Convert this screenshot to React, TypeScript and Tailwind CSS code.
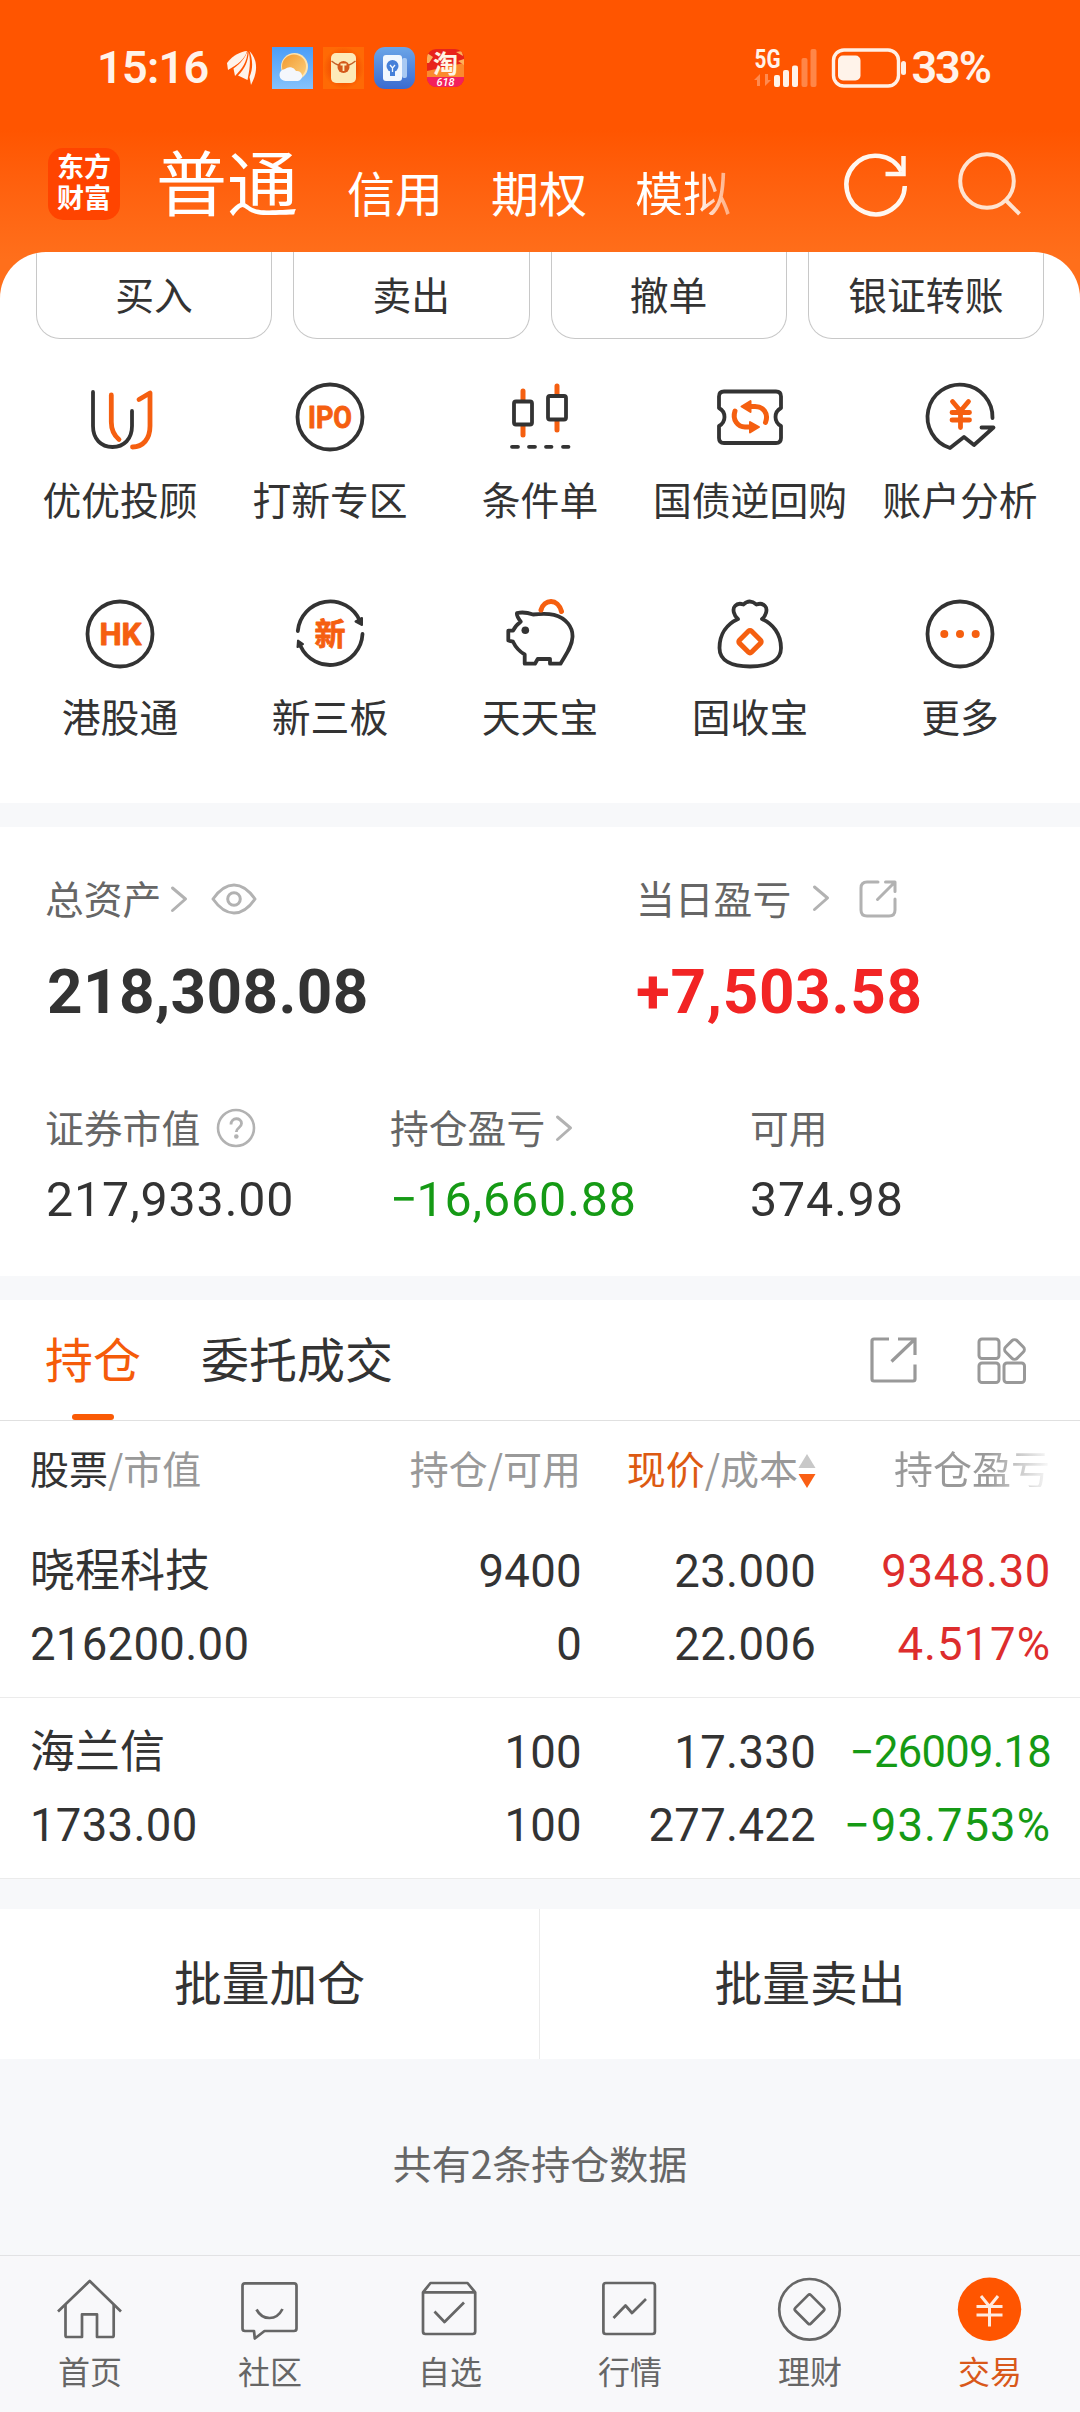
import React from "react";

const DARK = "#333333";
const ORANGE = "#f55f10";

/* ---------- status bar ---------- */

function StatusBar() {
  return (
    <div className="flex h-[136px] items-center text-[#fff3ea]">
      <span className="ml-[97px] w-[130px] whitespace-nowrap font-['Roboto'] text-[45px] font-semibold leading-[48px] tracking-[-0.7px]">
        15:16
      </span>
      <svg width="30" height="36" viewBox="0 0 30 36" fill="#fff3ea">
        <path d="M0 13C6 5 14 1.500 20 1C18 9 10 15 1 20Z" />
        <path d="M20.500 1C20.500 11 15 19 8 26L6.500 18.500C14 13 18 8 20.500 1Z" />
        <path d="M22.500 1C31 10 31 22 24 35L22.500 27C26.500 18 25.500 9 22.500 1Z" />
        <path d="M21.800 2C24 12 22.500 20 20.500 30L11 25.500C18 19 21 11 21.800 2Z" />
      </svg>
      <svg className="ml-[15px]" width="41" height="42" viewBox="0 0 41 42">
        <defs>
          <linearGradient id="sky" x1="0" y1="0" x2="0" y2="1">
            <stop offset="0" stopColor="#4a9df8" />
            <stop offset="1" stopColor="#86c2fb" />
          </linearGradient>
          <linearGradient id="sun" x1="0" y1="0" x2="1" y2="1">
            <stop offset="0" stopColor="#f2992f" />
            <stop offset="1" stopColor="#fcd07c" />
          </linearGradient>
        </defs>
        <rect width="41" height="42" fill="url(#sky)" />
        <circle cx="22.500" cy="19.500" r="13.500" fill="#fde3ae" />
        <circle cx="22" cy="19.500" r="12" fill="url(#sun)" />
        <path d="M14 34a6 6 0 0 1-1-12a7 7 0 0 1 11 2a5 5 0 0 1 2 10z" fill="#f4f7fc" />
      </svg>
      <svg className="ml-[10px]" width="41" height="42" viewBox="0 0 41 42">
        <defs>
          <radialGradient id="env">
            <stop offset="0.500" stopColor="#f04a00" />
            <stop offset="1" stopColor="#ff6a05" />
          </radialGradient>
        </defs>
        <rect width="41" height="42" fill="url(#env)" />
        <rect x="8" y="6" width="25" height="30" rx="5" fill="#fdeab8" />
        <path d="M8.500 14Q20.500 24 32.500 14" fill="none" stroke="#c4602a" strokeWidth="1.500" />
        <circle cx="20.500" cy="20" r="6" fill="#d4591b" />
        <path d="M17.500 17.500H23.500M20.500 17.500V24" stroke="#fdeab8" strokeWidth="1.800" />
      </svg>
      <svg className="ml-[10px]" width="41" height="42" viewBox="0 0 41 42">
        <defs>
          <linearGradient id="tip" x1="0" y1="0" x2="0" y2="1">
            <stop offset="0" stopColor="#6ba5e8" />
            <stop offset="1" stopColor="#3a6bd0" />
          </linearGradient>
        </defs>
        <rect width="41" height="42" rx="11" fill="url(#tip)" />
        <rect x="28" y="11" width="5" height="20" rx="2" fill="#a9c9f3" />
        <rect x="9" y="8" width="19" height="26" rx="3" fill="#f2f7fe" />
        <circle cx="18.500" cy="19" r="6" fill="#4680d9" />
        <path d="M16 24H21V29H16Z" fill="#4680d9" />
        <path d="M16 18L18.500 21L21 18M18.500 21V25" stroke="#f2f7fe" strokeWidth="1.300" fill="none" />
      </svg>
      <svg className="ml-[12px] overflow-visible" width="37" height="38" viewBox="0 0 37 38">
        <defs>
          <clipPath id="tbClip">
            <rect width="37" height="38" rx="9" />
          </clipPath>
        </defs>
        <g clipPath="url(#tbClip)">
          <rect width="37" height="38" fill="#e8231b" />
          <path d="M0 22L37 14V28H0Z" fill="#fb8a2e" />
          <path d="M0 4L6 8L2 14L0 14ZM29 3L35 2L36 7ZM31 12L37 10V16Z" fill="#fcb05a" />
          <rect y="28" width="37" height="10" fill="#f3205c" />
        </g>
        <text x="18.500" y="24" textAnchor="middle" fontFamily="Noto Sans CJK SC, sans-serif" fontWeight="700" fontSize="25" fill="#fff5e5">
          淘
        </text>
        <text x="18.500" y="37" textAnchor="middle" fontFamily="Roboto, sans-serif" fontStyle="italic" fontWeight="500" fontSize="11" fill="#ffffff">
          618
        </text>
      </svg>

      <svg className="ml-auto overflow-visible" width="64" height="42" viewBox="0 0 64 42">
        <text x="0.500" y="20.500" fontFamily="Roboto, sans-serif" fontWeight="700" fontSize="25.500" textLength="26" lengthAdjust="spacingAndGlyphs" fill="#fff3ea">
          5G
        </text>
        <path d="M0 33L6 27V39H3V33ZM11 27V39L17 33H14V27Z" fill="#ff8a50" />
        <g fill="#fff3ea">
          <rect x="20" y="28" width="6" height="12" rx="2" />
          <rect x="29" y="23" width="6" height="17" rx="2" />
          <rect x="38" y="18.500" width="6" height="21.500" rx="2" />
        </g>
        <g fill="#ff8648">
          <rect x="47.500" y="11" width="6" height="29" rx="2" />
          <rect x="56.500" y="2" width="6" height="38" rx="2" />
        </g>
      </svg>
      <svg className="ml-[13px]" width="76" height="40" viewBox="0 0 76 40">
        <rect x="2.500" y="2" width="65" height="36" rx="10.500" fill="none" stroke="#fff0e6" strokeWidth="3.400" />
        <rect x="7" y="7.500" width="22.500" height="25" rx="5" fill="#fff3ea" />
        <rect x="70" y="13" width="5" height="14" rx="2.500" fill="#fff0e6" />
      </svg>
      <span className="ml-[4px] mr-[90px] whitespace-nowrap font-['Roboto'] text-[45px] font-semibold leading-[48px] tracking-[-2px]">
        33%
      </span>
    </div>
  );
}

/* ---------- top tabs ---------- */

function TopTabs() {
  return (
    <div className="flex h-[116px] items-start text-white">
      <div className="ml-[48px] mt-[12px] flex h-[72px] w-[72px] flex-col items-center justify-center rounded-[15px] bg-[#ff4400] font-['Roboto','Noto_Sans_CJK_SC'] text-[27px] font-bold leading-[31px]">
        <span>东方</span>
        <span>财富</span>
      </div>
      <span className="ml-[36px] mt-[7px] text-[71px] leading-[72px]">普通</span>
      <div className="ml-[49px] mt-[31px] flex gap-[48px] text-[48px] leading-[48px]">
        <span>信用</span>
        <span>期权</span>
        <span className="bg-linear-to-r from-white from-62% to-white/45 bg-clip-text text-transparent">
          模拟
        </span>
      </div>
      <svg className="ml-auto mt-[13px]" width="72" height="72" viewBox="0 0 72 72" fill="none" stroke="#fff7f0" strokeWidth="4.500">
        <path d="M64.800 37A29.200 29.200 0 1 1 61.500 22.500" />
        <path d="M45.500 25H63.500V7" />
      </svg>
      <svg className="ml-[41px] mr-[55px] mt-[13px]" width="72" height="72" viewBox="0 0 72 72" fill="none" stroke="#ffe3d0" strokeWidth="4">
        <circle cx="34" cy="32" r="26.800" />
        <path d="M52.500 51L66.500 65" />
      </svg>
    </div>
  );
}

/* ---------- shortcut grid ---------- */

function ShortcutIcon({ children }: { children: React.ReactNode }) {
  return (
    <svg width="80" height="80" viewBox="0 0 80 80" fill="none" stroke={DARK} strokeWidth="3.800" strokeLinecap="round" strokeLinejoin="round">
      {children}
    </svg>
  );
}

const shortcuts: { label: string; icon: React.ReactNode }[] = [
  {
    label: "优优投顾",
    icon: (
      <>
        <path d="M13 15V49C13 62 21 70 32.500 70S52 62 52 49V34" />
        <g stroke={ORANGE} strokeWidth="4.800">
          <path d="M31.300 18V45Q31.300 56 39 62.500" />
          <path d="M59 22.500L70 16V49C70 62 63 70 52.500 70" />
        </g>
      </>
    ),
  },
  {
    label: "打新专区",
    icon: (
      <>
        <circle cx="40" cy="40" r="32.500" />
        <text x="40" y="51" textAnchor="middle" textLength="44" lengthAdjust="spacingAndGlyphs" fontFamily="Roboto, sans-serif" fontWeight="700" fontSize="30.500" fill={ORANGE} stroke={ORANGE} strokeWidth="0.900">
          IPO
        </text>
      </>
    ),
  },
  {
    label: "条件单",
    icon: (
      <>
        <path d="M23 14V23M23 49V58M57 9V18M57 44V53" stroke={ORANGE} strokeWidth="5" />
        <rect x="14" y="24.500" width="18" height="23" rx="2" />
        <rect x="48" y="19" width="18" height="23.500" rx="2" />
        <path d="M12 69.800H18M29 69.800H35M46 69.800H51.500M63 69.800H68.500" />
      </>
    ),
  },
  {
    label: "国债逆回购",
    icon: (
      <>
        <path d="M14 14.500H66Q71 14.500 71 19.500V31Q65.500 34 65.500 40T71 49V61Q71 66 66 66H14Q9 66 9 61V49Q14.500 46 14.500 40T9 31V19.500Q9 14.500 14 14.500Z" />
        <g stroke={ORANGE} strokeWidth="5">
          <path d="M25 34C22 43 28 50 35 50H42" />
          <path d="M55.500 45.500C59 36 53 29.500 45 29.500H38" />
        </g>
        <path d="M49 50L40 45V55.500ZM31.500 29.500L40.500 24V35Z" fill={ORANGE} stroke={ORANGE} strokeWidth="2" />
      </>
    ),
  },
  {
    label: "账户分析",
    icon: (
      <>
        <path d="M72.500 41A32.500 32.500 0 1 0 30 71L44 60L54 68L73.500 50.500H61.500" />
        <path d="M32.500 24.500L40.500 34L48.500 24.500M32 35.500H49.500M32 43H49.500M40.500 34V50.500" stroke={ORANGE} strokeWidth="4.800" />
      </>
    ),
  },
  {
    label: "港股通",
    icon: (
      <>
        <circle cx="40" cy="40" r="32.500" />
        <text x="40.500" y="51" textAnchor="middle" textLength="42" lengthAdjust="spacingAndGlyphs" fontFamily="Roboto, sans-serif" fontWeight="700" fontSize="30.500" fill={ORANGE} stroke={ORANGE} strokeWidth="0.900">
          HK
        </text>
      </>
    ),
  },
  {
    label: "新三板",
    icon: (
      <>
        <path d="M7.800 37A32.500 32.500 0 0 1 70 27M72.500 40A32.500 32.500 0 0 1 10.500 52" />
        <path d="M72 31L65.500 27.500L72 24ZM8 46.500L7.500 53L13 50Z" fill={DARK} strokeWidth="2" />
        <text x="40" y="51" textAnchor="middle" fontFamily="Noto Sans CJK SC, sans-serif" fontWeight="700" fontSize="31" fill={ORANGE} stroke={ORANGE} strokeWidth="0.800">
          新
        </text>
      </>
    ),
  },
  {
    label: "天天宝",
    icon: (
      <>
        <path d="M20.700 27.700Q16 21 17 19Q25 17.500 33 20.500Q46 19 54 20.800C66 24 73 33 72.500 43C72 53 66 60 60.500 69.700H50V64.800L37.700 65L35 69.700H24.700V60.500Q17 56 13 47.700L8.300 46.500V36.700H13Q15 32 20.700 27.700Z" />
        <circle cx="25.300" cy="36.300" r="3.800" fill={DARK} stroke="none" />
        <path d="M41 16C44 5 58 4 61.500 17.500" stroke={ORANGE} strokeWidth="5" />
      </>
    ),
  },
  {
    label: "固收宝",
    icon: (
      <>
        <path d="M28 25C24 22 22 15 25 12Q28 8.500 33.500 10.500Q39.500 4.500 46.500 10.500Q52 8.500 55 12C58 15 56 22 52 25C63 30 71 40 71 54C71 67 58 72.500 40 72.500S9.500 67 9.500 54C9.500 40 17 30 28 25Z" />
        <rect x="31.500" y="39.200" width="17" height="17" rx="2" transform="rotate(45 40 47.700)" stroke={ORANGE} strokeWidth="5" />
      </>
    ),
  },
  {
    label: "更多",
    icon: (
      <>
        <circle cx="40" cy="40" r="32.500" />
        <g fill={ORANGE} stroke="none">
          <circle cx="24.300" cy="40" r="4" />
          <circle cx="40" cy="40" r="4" />
          <circle cx="55.700" cy="40" r="4" />
        </g>
      </>
    ),
  },
];

function Shortcuts() {
  return (
    <div className="mt-[38px] grid grid-cols-5 px-[15px]">
      {shortcuts.map((s) => (
        <div key={s.label} className="flex h-[217px] flex-col items-center">
          <ShortcutIcon>{s.icon}</ShortcutIcon>
          <span className="mt-[21px] whitespace-nowrap text-[38.800px] leading-[40px]">{s.label}</span>
        </div>
      ))}
    </div>
  );
}

/* ---------- assets ---------- */

function Chevron({ className }: { className?: string }) {
  return (
    <svg className={className} width="18" height="28" viewBox="0 0 18 28" fill="none" stroke="#b2b2b2" strokeWidth="3" strokeLinecap="round" strokeLinejoin="round">
      <path d="M2.500 3L15.500 14L2.500 25.500" />
    </svg>
  );
}

function Assets() {
  return (
    <section className="h-[449px] bg-white pt-[50px]">
      <div className="flex h-[40px] items-center text-[38.800px] leading-[40px] text-[#666]">
        <div className="flex w-[636px] items-center pl-[45px]">
          <span>总资产</span>
          <Chevron className="ml-[9px] mt-[3px]" />
          <svg className="ml-[23px] mt-[4px]" width="46" height="32" viewBox="0 0 46 32" fill="none" stroke="#b2b2b2" strokeWidth="3">
            <path d="M2 16C9 6 16 2 23 2S37 6 44 16C37 26 30 30 23 30S9 26 2 16Z" strokeLinejoin="round" />
            <circle cx="23" cy="16" r="6.300" />
          </svg>
        </div>
        <span>当日盈亏</span>
        <Chevron className="ml-[21px] mt-[2px]" />
        <svg className="ml-[29px] mt-[3px]" width="38" height="38" viewBox="0 0 38 38" fill="none" stroke="#b2b2b2" strokeWidth="3" strokeLinecap="round" strokeLinejoin="round">
          <path d="M19 2H8Q2 2 2 8V30Q2 36 8 36H30Q36 36 36 30V19" />
          <path d="M26.500 2H36V11.500M35 3L18.500 19.500" />
        </svg>
      </div>
      <div className="mt-[43px] flex font-['Roboto'] text-[62px] font-bold leading-[64px]">
        <span className="w-[636px] pl-[47px] tracking-[0.4px]">218,308.08</span>
        <span className="tracking-[0.7px] text-[#f22424]">+7,503.58</span>
      </div>
      <div className="mt-[82px] flex h-[40px] items-center text-[38.800px] leading-[40px] text-[#666]">
        <div className="flex w-[390px] items-center pl-[45px]">
          <span>证券市值</span>
          <svg className="ml-[16px] mt-[4px]" width="40" height="40" viewBox="0 0 40 40" fill="none" stroke="#b2b2b2">
            <circle cx="20" cy="20" r="18" strokeWidth="2.600" />
            <path d="M15 16.500C15 9 25.500 9 25.500 15.500C25.500 20 20.300 19.500 20.300 24" strokeWidth="2.800" />
            <circle cx="20.300" cy="28.500" r="2.300" fill="#b2b2b2" stroke="none" />
          </svg>
        </div>
        <div className="flex w-[360px] items-center">
          <span>持仓盈亏</span>
          <Chevron className="ml-[10px] mt-[4px]" />
        </div>
        <span>可用</span>
      </div>
      <div className="mt-[30px] flex font-['Roboto'] text-[48.300px] leading-[48px] tracking-[0.9px]">
        <span className="w-[390px] pl-[46px]">217,933.00</span>
        <span className="w-[360px] text-[#159a15]">
          <span className="-mr-[2px]">−</span>16,660.88
        </span>
        <span>374.98</span>
      </div>
    </section>
  );
}

/* ---------- holdings ---------- */

function PanelTabs() {
  return (
    <div className="flex h-[121px] items-start border-b-[1.5px] border-[#e0e0e0] bg-white">
      <div className="ml-[45px] mt-[33px] flex h-[87px] flex-col items-center justify-between text-[48px] leading-[48px] text-[#f55b0a]">
        <span>持仓</span>
        <span className="h-[6px] w-[42px] rounded-full bg-[#fa5a05]" />
      </div>
      <span className="ml-[60px] mt-[33px] text-[48px] leading-[48px]">委托成交</span>
      <svg className="ml-auto mt-[37px]" width="47" height="46" viewBox="0 0 47 46" fill="none" stroke="#999" strokeWidth="3.200">
        <path d="M19 2H4Q2 2 2 4V42Q2 44 4 44H43Q45 44 45 42V27.500" />
        <path d="M28 2H45V18M44.500 2.500L21.500 24.500" />
      </svg>
      <svg className="ml-[60px] mr-[53px] mt-[37px]" width="50" height="48" viewBox="0 0 50 48" fill="none" stroke="#999" strokeWidth="3">
        <rect x="2" y="2" width="20" height="19.500" rx="3" />
        <rect x="2" y="26" width="20" height="19.500" rx="3" />
        <rect x="27" y="26" width="20.500" height="19.500" rx="3" />
        <rect x="29.500" y="4.500" width="16" height="16" rx="3.500" transform="rotate(45 37.500 12.500)" />
      </svg>
    </div>
  );
}

function TableHead() {
  return (
    <div className="flex h-[96px] items-center bg-white pb-[5px] pl-[30px] text-[39px] leading-[40px] text-[#999]">
      <span className="w-[300px]">
        <span className="text-[#333]">股票</span>/市值
      </span>
      <span className="w-[251px] text-right">持仓/可用</span>
      <span className="flex w-[235px] items-center justify-end whitespace-nowrap">
        <span className="text-[#dd5a12]">现价</span>/成本
        <svg className="mt-[8px]" width="18" height="36" viewBox="0 0 18 36">
          <path d="M9 1L17.500 15H0.500Z" fill="#c8c8c8" />
          <path d="M0.500 21H17.500L9 35Z" fill="#fa5f14" />
        </svg>
      </span>
      <span className="ml-[78px] bg-linear-to-r from-[#999] from-60% to-[#999]/5 bg-clip-text text-transparent">
        持仓盈亏
      </span>
    </div>
  );
}

interface Holding {
  name: string;
  value: string;
  held: string;
  available: string;
  price: string;
  cost: string;
  profit: string;
  ratio: string;
  up: boolean;
}

const holdings: Holding[] = [
  { name: "晓程科技", value: "216200.00", held: "9400", available: "0", price: "23.000", cost: "22.006", profit: "9348.30", ratio: "4.517%", up: true },
  { name: "海兰信", value: "1733.00", held: "100", available: "100", price: "17.330", cost: "277.422", profit: "−26009.18", ratio: "−93.753%", up: false },
];

function HoldingRow({ h }: { h: Holding }) {
  const tone = h.up ? "text-[#dd2d2d]" : "text-[#159a15]";
  const profitSize = h.up ? "tracking-[0.6px]" : "text-[43.5px] tracking-[-0.7px]";
  return (
    <div className="flex h-[181px] border-b border-[#ebebeb] bg-white pl-[30px] pt-[25px] font-['Roboto'] text-[45.500px] leading-[60px] tracking-[0.3px]">
      <div className="flex w-[300px] flex-col gap-[17px]">
        <span className="-mt-[4px] font-['Noto_Sans_CJK_SC'] text-[45px] tracking-normal">{h.name}</span>
        <span>{h.value}</span>
      </div>
      <div className="flex w-[252px] flex-col gap-[13px] text-right">
        <span>{h.held}</span>
        <span>{h.available}</span>
      </div>
      <div className="flex w-[234px] flex-col gap-[13px] text-right">
        <span>{h.price}</span>
        <span>{h.cost}</span>
      </div>
      <div className={`flex w-[235px] flex-col gap-[13px] text-right ${tone}`}>
        <span className={profitSize}>{h.profit}</span>
        <span className="tracking-[1px]">{h.ratio}</span>
      </div>
    </div>
  );
}

function BatchActions() {
  return (
    <div className="mt-[30px] flex h-[150px] bg-white text-[47.800px] leading-[48px]">
      <span className="flex w-[540px] items-center justify-center border-r border-[#ebebeb] pb-[7px]">批量加仓</span>
      <span className="flex flex-1 items-center justify-center pb-[7px]">批量卖出</span>
    </div>
  );
}

/* ---------- bottom navigation ---------- */

const navItems: { label: string; icon: React.ReactNode; active?: boolean }[] = [
  {
    label: "首页",
    icon: (
      <>
        <path d="M4 38.500L35.700 8L67 38.500" />
        <path d="M11.500 32V62.500Q11.500 64 13 64H28V41.300H43V64H58Q59.700 64 59.700 62.500V32" />
      </>
    ),
  },
  {
    label: "社区",
    icon: (
      <>
        <path d="M11 10.300H60Q62.500 10.300 62.500 13V55.500Q62.500 58 60 58H30.500L20.800 65.500L20 58H11Q8.500 58 8.500 55.500V13Q8.500 10.300 11 10.300Z" />
        <path d="M22.500 36.500Q27 45 35.500 45T48.500 36" />
      </>
    ),
  },
  {
    label: "自选",
    icon: (
      <>
        <path d="M9 19.300L16.500 10H53.500L61.200 19.300V58.500Q61.200 61 58.700 61H11.500Q9 61 9 58.500ZM9 19.300H61.200" />
        <path d="M20.500 38.500L30.500 49L50 29.500" />
      </>
    ),
  },
  {
    label: "行情",
    icon: (
      <>
        <rect x="9.400" y="10" width="51.500" height="51" rx="2.500" />
        <path d="M19.500 45L31.500 32.500L38 40L52 26" />
      </>
    ),
  },
  {
    label: "理财",
    icon: (
      <>
        <circle cx="35.500" cy="36.300" r="30.300" />
        <rect x="24.500" y="25.300" width="22" height="22" rx="2" transform="rotate(45 35.500 36.300)" />
      </>
    ),
  },
  {
    label: "交易",
    active: true,
    icon: (
      <>
        <circle cx="35.500" cy="36.300" r="31.700" fill="#ff5500" stroke="none" />
        <path d="M27 23L35.500 33.500L44 23M22.500 33.500H48.500M22.500 42H48.500M35.500 33.500V53.500" stroke="#ffeadf" strokeWidth="3" />
      </>
    ),
  },
];

function BottomNav() {
  return (
    <nav className="flex h-[157px] border-t-[1.5px] border-[#e2e2e4] bg-[#f8f8fa] pt-[17px]">
      {navItems.map((n) => (
        <div
          key={n.label}
          className={`flex w-[180px] flex-col items-center text-[32px] leading-[34px] ${n.active ? "text-[#d9581a]" : "text-[#666]"}`}
        >
          <svg width="72" height="72" viewBox="0 0 72 72" fill="none" stroke="#666" strokeWidth="2.700" strokeLinejoin="round">
            {n.icon}
          </svg>
          <span className="mt-[8px]">{n.label}</span>
        </div>
      ))}
    </nav>
  );
}

export default function App() {
  return (
    <div className="flex h-[2412px] w-[1080px] flex-col overflow-hidden bg-[#f7f8fa] font-['Noto_Sans_CJK_SC','Noto_Sans',sans-serif] text-[#333]">
      <div className="bg-linear-to-b from-[#ff5500] from-[130px] to-[#ff6f1b] to-[260px]">
        <StatusBar />
        <TopTabs />
        <div className="h-[551px] overflow-hidden rounded-t-[46px] bg-white">
          <div className="flex gap-[21px] pl-[36px] pr-[36px] text-[38.800px] leading-[40px]">
            {["买入", "卖出", "撤单", "银证转账"].map((t) => (
              <div key={t} className="flex h-[87px] flex-1 items-center justify-center rounded-b-[24px] border border-t-0 border-[#c8c8c8] pb-[4px]">
                {t}
              </div>
            ))}
          </div>
          <Shortcuts />
        </div>
      </div>
      <div className="h-[24px]" />
      <Assets />
      <div className="h-[24px]" />
      <PanelTabs />
      <TableHead />
      {holdings.map((h) => (
        <HoldingRow key={h.name} h={h} />
      ))}
      <BatchActions />
      <p className="mt-[83px] text-center text-[39px] leading-[40px] text-[#666]">共有2条持仓数据</p>
      <div className="flex-1" />
      <BottomNav />
    </div>
  );
}
